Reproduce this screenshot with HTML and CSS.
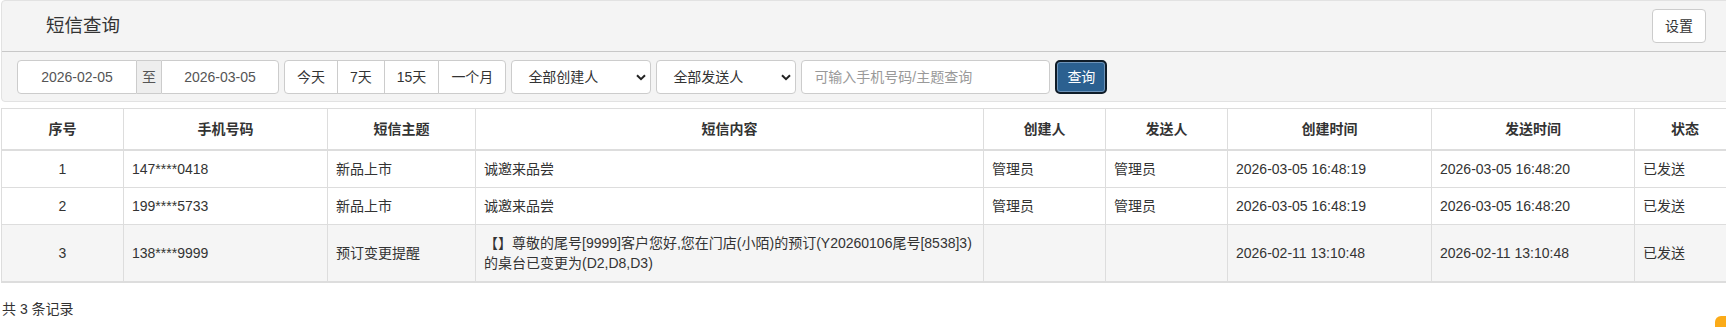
FILE: index.html
```html
<!DOCTYPE html>
<html lang="zh-CN">
<head>
<meta charset="utf-8">
<title>短信查询</title>
<link rel="stylesheet" href="styles.css">
</head>
<body>
<div class="page">
  <div class="panel">
    <div class="panel-head">
      <h3 class="title">短信查询</h3>
      <button class="btn btn-settings" type="button">设置</button>
    </div>
    <div class="toolbar">
      <div class="date-range">
        <input class="field date date-start" type="text" value="2026-02-05">
        <span class="addon">至</span>
        <input class="field date date-end" type="text" value="2026-03-05">
      </div>
      <div class="btn-group">
        <button class="btn" type="button">今天</button>
        <button class="btn" type="button">7天</button>
        <button class="btn" type="button">15天</button>
        <button class="btn" type="button">一个月</button>
      </div>
      <div class="field select">
        <span>全部创建人</span>
        <svg class="chev" width="10" height="7" viewBox="0 0 10 7"><path d="M1 1.2 L5 5.2 L9 1.2" fill="none" stroke="#222" stroke-width="2"/></svg>
      </div>
      <div class="field select">
        <span>全部发送人</span>
        <svg class="chev" width="10" height="7" viewBox="0 0 10 7"><path d="M1 1.2 L5 5.2 L9 1.2" fill="none" stroke="#222" stroke-width="2"/></svg>
      </div>
      <input class="field search" type="text" placeholder="可输入手机号码/主题查询">
      <button class="btn btn-query" type="button">查询</button>
    </div>
  </div>

  <table class="grid">
    <colgroup>
      <col class="c-no">
      <col class="c-phone">
      <col class="c-subject">
      <col class="c-content">
      <col class="c-creator">
      <col class="c-sender">
      <col class="c-ctime">
      <col class="c-stime">
      <col class="c-status">
    </colgroup>
    <thead>
      <tr>
        <th>序号</th>
        <th>手机号码</th>
        <th>短信主题</th>
        <th>短信内容</th>
        <th>创建人</th>
        <th>发送人</th>
        <th>创建时间</th>
        <th>发送时间</th>
        <th>状态</th>
      </tr>
    </thead>
    <tbody>
      <tr>
        <td class="center">1</td>
        <td>147****0418</td>
        <td>新品上市</td>
        <td>诚邀来品尝</td>
        <td>管理员</td>
        <td>管理员</td>
        <td>2026-03-05 16:48:19</td>
        <td>2026-03-05 16:48:20</td>
        <td>已发送</td>
      </tr>
      <tr>
        <td class="center">2</td>
        <td>199****5733</td>
        <td>新品上市</td>
        <td>诚邀来品尝</td>
        <td>管理员</td>
        <td>管理员</td>
        <td>2026-03-05 16:48:19</td>
        <td>2026-03-05 16:48:20</td>
        <td>已发送</td>
      </tr>
      <tr class="hover">
        <td class="center">3</td>
        <td>138****9999</td>
        <td>预订变更提醒</td>
        <td>【】尊敬的尾号[9999]客户您好,您在门店(小陌)的预订(Y20260106尾号[8538]3)<br>的桌台已变更为(D2,D8,D3)</td>
        <td></td>
        <td></td>
        <td>2026-02-11 13:10:48</td>
        <td>2026-02-11 13:10:48</td>
        <td>已发送</td>
      </tr>
    </tbody>
  </table>

  <div class="summary">共 3 条记录</div>
</div>
<div class="float-tab"></div>
</body>
</html>
```

FILE: styles.css
```css
html, body {
  margin: 0;
  padding: 0;
  overflow: hidden;
  background: #fff;
}

body {
  font-family: "Liberation Sans", Arial, "Noto Sans CJK SC", sans-serif;
  font-size: 14px;
  line-height: 20px;
  color: #333;
}

.page {
  width: 1735px;
  margin-left: 1px;
}

/* ---------- panel ---------- */
.panel {
  background: #f4f4f4;
  border: 1px solid #e2e2e2;
  border-radius: 4px;
}

.panel-head {
  height: 50px;
  display: flex;
  align-items: center;
  justify-content: space-between;
  padding: 0 29px 0 44px;
  border-bottom: 1px solid #c8c8c8;
}

.title {
  margin: 0;
  font-size: 18.5px;
  font-weight: normal;
  line-height: 24px;
  color: #333;
}

.btn {
  font-family: inherit;
  font-size: 14px;
  line-height: 20px;
  color: #333;
  background: #fff;
  border: 1px solid #ccc;
  border-radius: 4px;
  padding: 6px 12px;
  height: 34px;
  cursor: pointer;
}

.btn-settings {
  width: 54px;
  height: 34px;
  padding: 0;
  border-radius: 4px;
}

.toolbar {
  display: flex;
  align-items: center;
  gap: 5px;
  padding: 8px 15px 7px 15px;
}

.field {
  box-sizing: border-box;
  height: 34px;
  font-family: inherit;
  font-size: 14px;
  color: #555;
  background: #fff;
  border: 1px solid #ccc;
  border-radius: 4px;
  padding: 6px 12px;
  margin: 0;
  outline: none;
}

.date-range {
  display: flex;
}

.date {
  text-align: center;
  padding: 6px 4px;
  color: #555;
}

.date-start {
  width: 120px;
  border-radius: 4px 0 0 4px;
}

.date-end {
  width: 118px;
  border-radius: 0 4px 4px 0;
}

.addon {
  box-sizing: border-box;
  width: 24px;
  height: 34px;
  display: flex;
  align-items: center;
  justify-content: center;
  background: #eee;
  border-top: 1px solid #ccc;
  border-bottom: 1px solid #ccc;
  color: #555;
}

.btn-group {
  display: flex;
}

.btn-group .btn {
  border-radius: 0;
  margin-left: -1px;
}

.btn-group .btn:first-child {
  margin-left: 0;
  border-radius: 4px 0 0 4px;
}

.btn-group .btn:last-child {
  border-radius: 0 4px 4px 0;
}

.select {
  width: 140px;
  display: flex;
  align-items: center;
  justify-content: space-between;
  padding: 0 4px 0 16px;
  color: #333;
}

.chev {
  display: block;
}

.search {
  width: 249px;
  color: #555;
}

.search::placeholder {
  color: #999;
}

.btn-query {
  width: 52px;
  padding: 0;
  color: #fff;
  background: #2b6090;
  border: 2px solid #0f1c28;
  box-shadow: inset 0 0 0 1px #6d93b8;
  border-radius: 5px;
}

/* ---------- table ---------- */
.grid {
  margin-top: 6px;
  width: 1734px;
  table-layout: fixed;
  border-collapse: collapse;
  border: 1px solid #ddd;
}

.c-no { width: 122px; }
.c-phone { width: 204px; }
.c-subject { width: 148px; }
.c-content { width: 508px; }
.c-creator { width: 122px; }
.c-sender { width: 122px; }
.c-ctime { width: 204px; }
.c-stime { width: 203px; }
.c-status { width: 101px; }

.grid th {
  padding: 10px 8px;
  line-height: 20px;
  font-weight: bold;
  text-align: center;
  border: 1px solid #ddd;
  border-bottom: 2px solid #ddd;
  color: #333;
}

.grid td {
  padding: 8px 8px;
  line-height: 20px;
  vertical-align: middle;
  border: 1px solid #ddd;
  text-align: left;
  color: #333;
  white-space: nowrap;
}

.grid td.center {
  text-align: center;
}

.grid tbody tr:last-child td {
  border-bottom: 2px solid #ddd;
}

.grid tr.hover td {
  background: #f5f5f5;
}

.summary {
  margin-top: 16px;
  padding-left: 1px;
  line-height: 20px;
  color: #333;
}

/* floating corner tab */
.float-tab {
  position: fixed;
  left: 1715px;
  top: 316px;
  width: 40px;
  height: 40px;
  border-radius: 6px;
  background: #fbab18;
}
```
